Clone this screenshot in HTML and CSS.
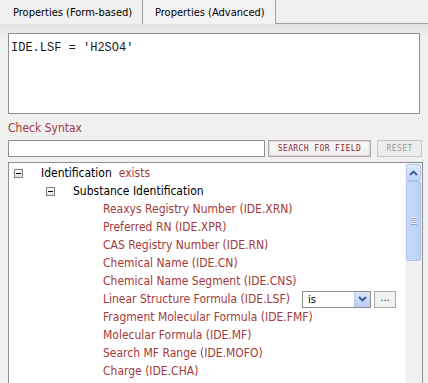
FILE: index.html
```html
<!DOCTYPE html>
<html>
<head>
<meta charset="utf-8">
<link rel="stylesheet" href="styles.css">
</head>
<body>
<div class="tabs">
  <div class="tab">Properties (Form-based)</div>
  <div class="tab active">Properties (Advanced)</div>
  <div class="tab-rest"></div>
</div>
<div class="panel">
  <div class="editor">IDE.LSF = 'H2SO4'</div>
  <div class="check">Check Syntax</div>
  <div class="search-row">
    <div class="search-input"></div>
    <div class="btn search-btn">SEARCH FOR FIELD</div>
    <div class="btn reset-btn">RESET</div>
  </div>
  <div class="tree">
    <div class="tree-body">
      <div class="row lvl1"><span class="toggle"></span><span class="label">Identification</span><span class="red exists">exists</span></div>
      <div class="row lvl2"><span class="toggle"></span><span class="label">Substance Identification</span></div>
      <div class="row leaf red">Reaxys Registry Number (IDE.XRN)</div>
      <div class="row leaf red">Preferred RN (IDE.XPR)</div>
      <div class="row leaf red">CAS Registry Number (IDE.RN)</div>
      <div class="row leaf red">Chemical Name (IDE.CN)</div>
      <div class="row leaf red">Chemical Name Segment (IDE.CNS)</div>
      <div class="row leaf red with-ctl"><span class="leaf-text">Linear Structure Formula (IDE.LSF)</span>
        <span class="select"><span class="sel-val">is</span><span class="sel-arrow"><svg width="9" height="6" viewBox="0 0 9 6"><path d="M1 1 L4.5 4.5 L8 1" fill="none" stroke="#3a5590" stroke-width="1.8"/></svg></span></span>
        <span class="dots">...</span>
      </div>
      <div class="row leaf red">Fragment Molecular Formula (IDE.FMF)</div>
      <div class="row leaf red">Molecular Formula (IDE.MF)</div>
      <div class="row leaf red">Search MF Range (IDE.MOFO)</div>
      <div class="row leaf red">Charge (IDE.CHA)</div>
    </div>
    <div class="scrollbar">
      <div class="sb-up"><svg width="9" height="6" viewBox="0 0 9 6"><path d="M1 5 L4.5 1.5 L8 5" fill="none" stroke="#3a5590" stroke-width="1.8"/></svg></div>
      <div class="sb-thumb"><span class="grip"></span></div>
      <div class="sb-track"></div>
    </div>
  </div>
</div>
</body>
</html>
```
FILE: styles.css
```css
html, body {
  margin: 0;
  padding: 0;
}
body {
  width: 428px;
  height: 383px;
  overflow: hidden;
  background: #f0f0f0;
  font-family: Tahoma, "DejaVu Sans Condensed", "Liberation Sans", sans-serif;
  font-size: 12px;
  color: #000;
}
.tabs {
  display: flex;
  height: 24px;
}
.tab {
  box-sizing: border-box;
  height: 24px;
  padding-left: 13px;
  line-height: 25px;
  font-size: 11px;
  white-space: nowrap;
  overflow: hidden;
  background: #f0f0f0;
  border-right: 1px solid #a0a0a0;
}
.tab:first-child {
  width: 143px;
}
.tab.active {
  width: 133px;
  padding-left: 12px;
  background: #f2f2f2;
}
.tab-rest {
  flex: 1;
  border-bottom: 1px solid #a0a0a0;
}
.panel {
  height: 359px;
  background: linear-gradient(#e2e2e2 0px, #f0f0f0 12px);
  padding: 9px 6px 0 8px;
  box-sizing: border-box;
}
.editor {
  box-sizing: border-box;
  width: 412px;
  height: 81px;
  background: #fff;
  border: 1px solid #8e8e8e;
  font-family: "Liberation Mono", "Courier New", monospace;
  font-size: 12px;
  padding: 7px 2px;
  color: #1a1a1a;
}
.check {
  color: #a33a3a;
  margin-top: 7px;
  height: 18px;
  line-height: 15px;
}
.search-row {
  display: flex;
  align-items: center;
  height: 18px;
  margin-top: 0;
}
.search-input {
  box-sizing: border-box;
  width: 258px;
  height: 17px;
  background: #fff;
  border: 1px solid #8e8e8e;
}
.btn {
  box-sizing: border-box;
  height: 17px;
  font-family: "DejaVu Sans Mono", monospace;
  font-size: 8px;
  letter-spacing: 0.4px;
  display: flex;
  align-items: center;
  justify-content: center;
  border: 1px solid #a8a8a8;
}
.search-btn {
  margin-left: 3px;
  width: 104px;
  color: #8b2a2a;
  background: linear-gradient(#fbfbfb, #eee);
  box-shadow: inset 0 0 2px #c88;
}
.reset-btn {
  margin-left: 6px;
  width: 45px;
  color: #999;
  border-color: #c8c8c8;
  background: #ececec;
}
.tree {
  box-sizing: border-box;
  margin-top: 5px;
  width: 415px;
  height: 230px;
  background: #fff;
  border: 1px solid #8e8e8e;
  display: flex;
}
.tree-body {
  flex: 1;
  padding-top: 1px;
}
.row {
  height: 18px;
  line-height: 18px;
  display: flex;
  align-items: center;
  white-space: nowrap;
}
.red {
  color: #a33a3a;
}
.toggle {
  box-sizing: border-box;
  width: 9px;
  height: 9px;
  border: 1px solid #808080;
  background: linear-gradient(#fff, #e4e4e4);
  position: relative;
}
.toggle::after {
  content: "";
  position: absolute;
  left: 1px;
  top: 3px;
  width: 5px;
  height: 1px;
  background: #000;
}
.lvl1 {
  padding-left: 5px;
}
.lvl1 .label {
  margin-left: 18px;
}
.exists {
  margin-left: 7px;
}
.lvl2 {
  padding-left: 37px;
}
.lvl2 .label {
  margin-left: 18px;
}
.leaf {
  padding-left: 94px;
}
.with-ctl .leaf-text {
  width: 199px;
}
.select {
  box-sizing: border-box;
  display: flex;
  width: 69px;
  height: 17px;
  border: 1px solid #8e8e8e;
  background: #fff;
  color: #000;
  font-size: 11px;
}
.sel-val {
  flex: 1;
  padding-left: 5px;
  line-height: 15px;
}
.sel-arrow {
  width: 15px;
  display: flex;
  align-items: center;
  justify-content: center;
  background: linear-gradient(#dde7fb, #b9cbf3);
  border-left: 1px solid #b8c8ea;
}
.dots {
  box-sizing: border-box;
  margin-left: 3px;
  width: 22px;
  height: 17px;
  border: 1px solid #a8a8a8;
  background: #f2f2f2;
  color: #333;
  font-size: 11px;
  line-height: 12px;
  text-align: center;
}
.scrollbar {
  width: 16px;
  display: flex;
  flex-direction: column;
  background: #f2f2f2;
  border-left: 1px solid #f7f7f7;
}
.sb-up {
  box-sizing: border-box;
  height: 17px;
  margin: 1px 1px 0 0;
  border: 1px solid #b6c7ef;
  border-radius: 2px;
  background: linear-gradient(#e3ebfd, #c2d3f8);
  display: flex;
  align-items: center;
  justify-content: center;
}
.sb-thumb {
  box-sizing: border-box;
  height: 80px;
  margin-right: 1px;
  border: 1px solid #b0c3ef;
  border-radius: 2px;
  background: linear-gradient(90deg, #c9d8fb, #bed0fa);
  display: flex;
  align-items: center;
  justify-content: center;
}
.grip {
  width: 6px;
  height: 8px;
  background: repeating-linear-gradient(#eef3fe 0 1px, #8ea6dc 1px 2px);
}
.sb-track {
  flex: 1;
  background: #f0f0f0;
}
```
